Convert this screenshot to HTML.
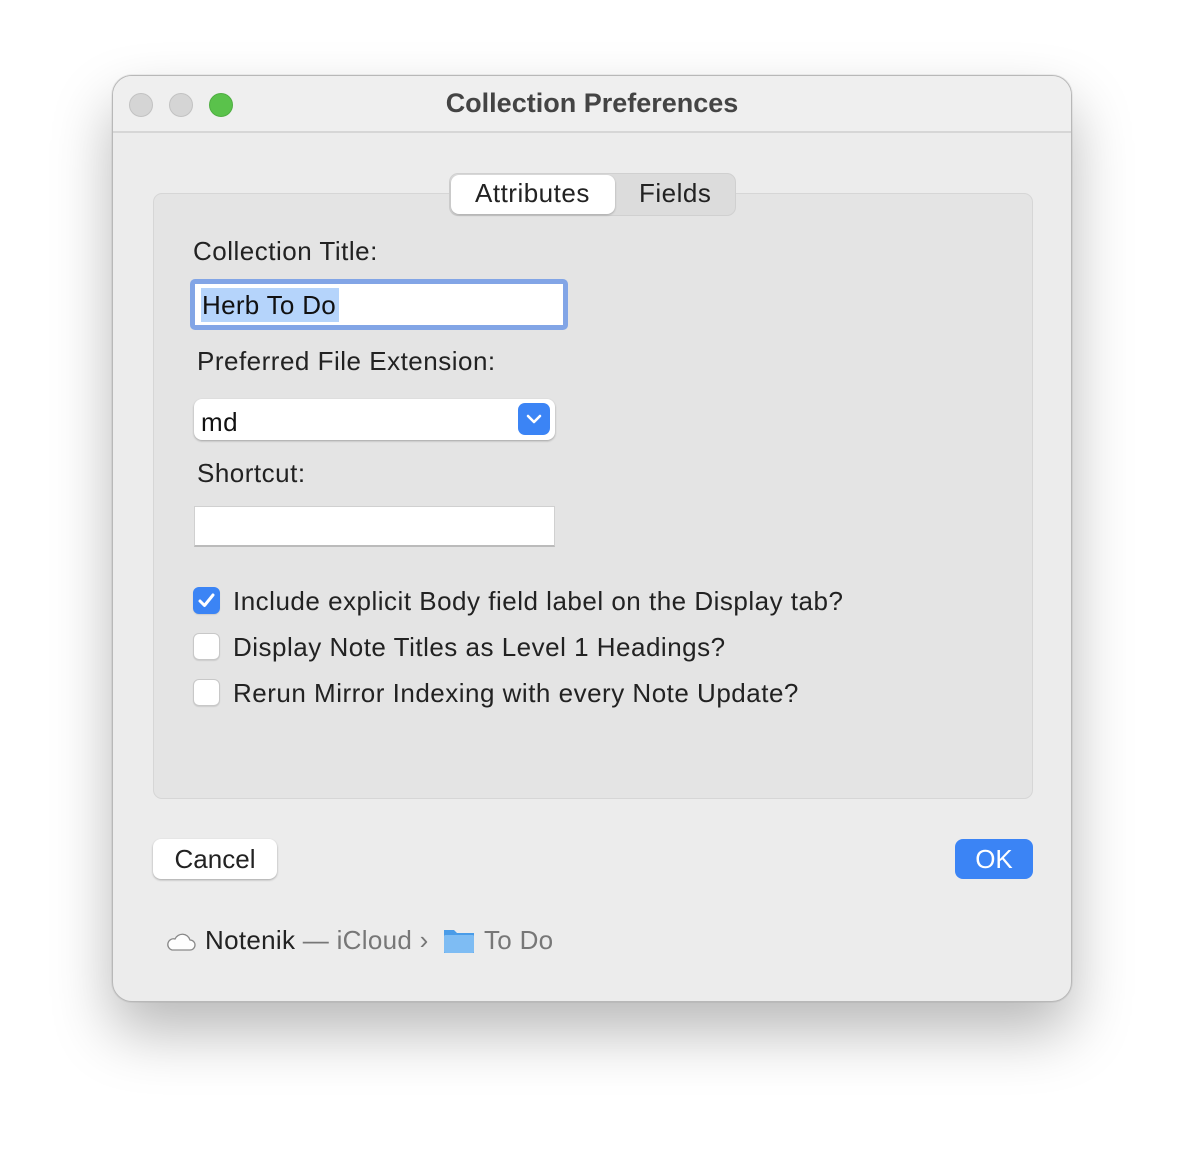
<!DOCTYPE html>
<html><head><style>
*{box-sizing:border-box;margin:0;padding:0}
body{width:1184px;height:1150px;background:#fff;font-family:"Liberation Sans",sans-serif;color:#222;position:relative;overflow:hidden}
.win{position:absolute;left:112px;top:75px;width:960px;height:927px;background:#ececec;border-radius:20px;border:1px solid #b8b8b8;box-shadow:0 30px 60px rgba(0,0,0,.28),0 0 0 1px rgba(0,0,0,.05);overflow:hidden}
.tb{position:absolute;left:0;top:0;width:100%;height:57px;background:#efefef;border-bottom:2px solid #d6d6d6}
.dot{position:absolute;top:17px;width:24px;height:24px;border-radius:50%;background:#d5d5d5;border:1px solid #c2c2c2}
.title{position:absolute;left:0;width:100%;top:12px;text-align:center;font-weight:bold;font-size:27px;color:#444}
.a{position:absolute;font-size:26px;letter-spacing:.5px;white-space:nowrap}
.panel{position:absolute;left:40px;top:117px;width:880px;height:606px;background:#e4e4e4;border:1px solid #d6d6d6;border-radius:9px}
.seg{position:absolute;left:336px;top:97px;width:287px;height:43px;background:#dcdcdc;border-radius:9px;border:1px solid #d0d0d0}
.segon{position:absolute;left:1px;top:1px;width:164px;height:39px;background:#fff;border-radius:8px;box-shadow:0 1px 2px rgba(0,0,0,.25)}
.field{position:absolute;background:#fff}
.cb{position:absolute;left:80px;width:27px;height:27px;border-radius:6px;background:#fff;border:1px solid #c8c8c8;box-shadow:0 1px 1px rgba(0,0,0,.1)}
.btn{position:absolute;height:40px;border-radius:8px;font-size:26px;text-align:center;line-height:40px}
</style></head><body>
<div class="win">
 <div class="tb">
  <div class="dot" style="left:16px"></div><div class="dot" style="left:56px"></div>
  <div class="dot" style="left:96px;background:#5ac24b;border-color:#4fae42"></div>
  <div class="title">Collection Preferences</div>
 </div>
 <div class="panel"></div>
 <div class="seg"><div class="segon"></div></div>
 <div class="a" style="left:362px;top:102px">Attributes</div>
 <div class="a" style="left:526px;top:102px">Fields</div>
 <div class="a" style="left:80px;top:160px">Collection Title:</div>
 <div class="field" style="left:77px;top:203px;width:378px;height:51px;border:5px solid #82a5e6;border-radius:5px"></div>
 <div style="position:absolute;left:88px;top:212px;width:138px;height:34px;background:#b5d4fb"></div>
 <div class="a" style="left:89px;top:214px;letter-spacing:.3px;color:#111">Herb To Do</div>
 <div class="a" style="left:84px;top:270px">Preferred File Extension:</div>
 <div class="field" style="left:81px;top:323px;width:361px;height:41px;border-radius:8px;box-shadow:0 1px 2px rgba(0,0,0,.3)"></div>
 <div style="position:absolute;left:405px;top:327px;width:32px;height:32px;border-radius:7px;background:#3b84f5"><svg width="32" height="32"><path d="M10 13l6 6 6-6" stroke="#fff" stroke-width="2.6" fill="none" stroke-linecap="round" stroke-linejoin="round"/></svg></div>
 <div class="a" style="left:88px;top:331px;color:#111">md</div>
 <div class="a" style="left:84px;top:382px">Shortcut:</div>
 <div class="field" style="left:81px;top:430px;width:361px;height:41px;border:1px solid #d0d0d0;border-bottom:2px solid #bbb"></div>
 <div class="cb" style="top:511px;background:#3b84f5;border-color:#3b84f5"><svg width="27" height="27" style="position:absolute;left:-1px;top:-1px"><path d="M7 14l4.5 4.5L20 8" stroke="#fff" stroke-width="3" fill="none" stroke-linecap="round" stroke-linejoin="round"/></svg></div>
 <div class="a" style="left:120px;top:510px">Include explicit Body field label on the Display tab?</div>
 <div class="cb" style="top:557px"></div>
 <div class="a" style="left:120px;top:556px">Display Note Titles as Level 1 Headings?</div>
 <div class="cb" style="top:603px"></div>
 <div class="a" style="left:120px;top:602px">Rerun Mirror Indexing with every Note Update?</div>
 <div class="btn" style="left:40px;top:763px;width:124px;background:#fff;box-shadow:0 1px 2px rgba(0,0,0,.3)">Cancel</div>
 <div class="btn" style="left:842px;top:763px;width:78px;background:#3b84f5;color:#fff">OK</div>
 <svg style="position:absolute;left:52px;top:853px" width="32" height="24"><path d="M7 21h18a5 5 0 0 0 0-10 8 8 0 0 0-15-1 5.5 5.5 0 0 0-3 11z" fill="#fdfdfd" stroke="#888" stroke-width="1.3"/></svg>
 <div class="a" style="left:92px;top:849px;letter-spacing:.3px;color:#222">Notenik <span style="color:#777">— iCloud ›</span></div>
 <svg style="position:absolute;left:330px;top:851px" width="32" height="28"><path d="M1 3h10l3 3h17v20H1z" fill="#4a9ce8"/><rect x="1" y="8" width="30" height="18" rx="1.5" fill="#7ebcf3"/></svg>
 <div class="a" style="left:371px;top:849px;letter-spacing:.3px;color:#777">To Do</div>
</div>
</body></html>
